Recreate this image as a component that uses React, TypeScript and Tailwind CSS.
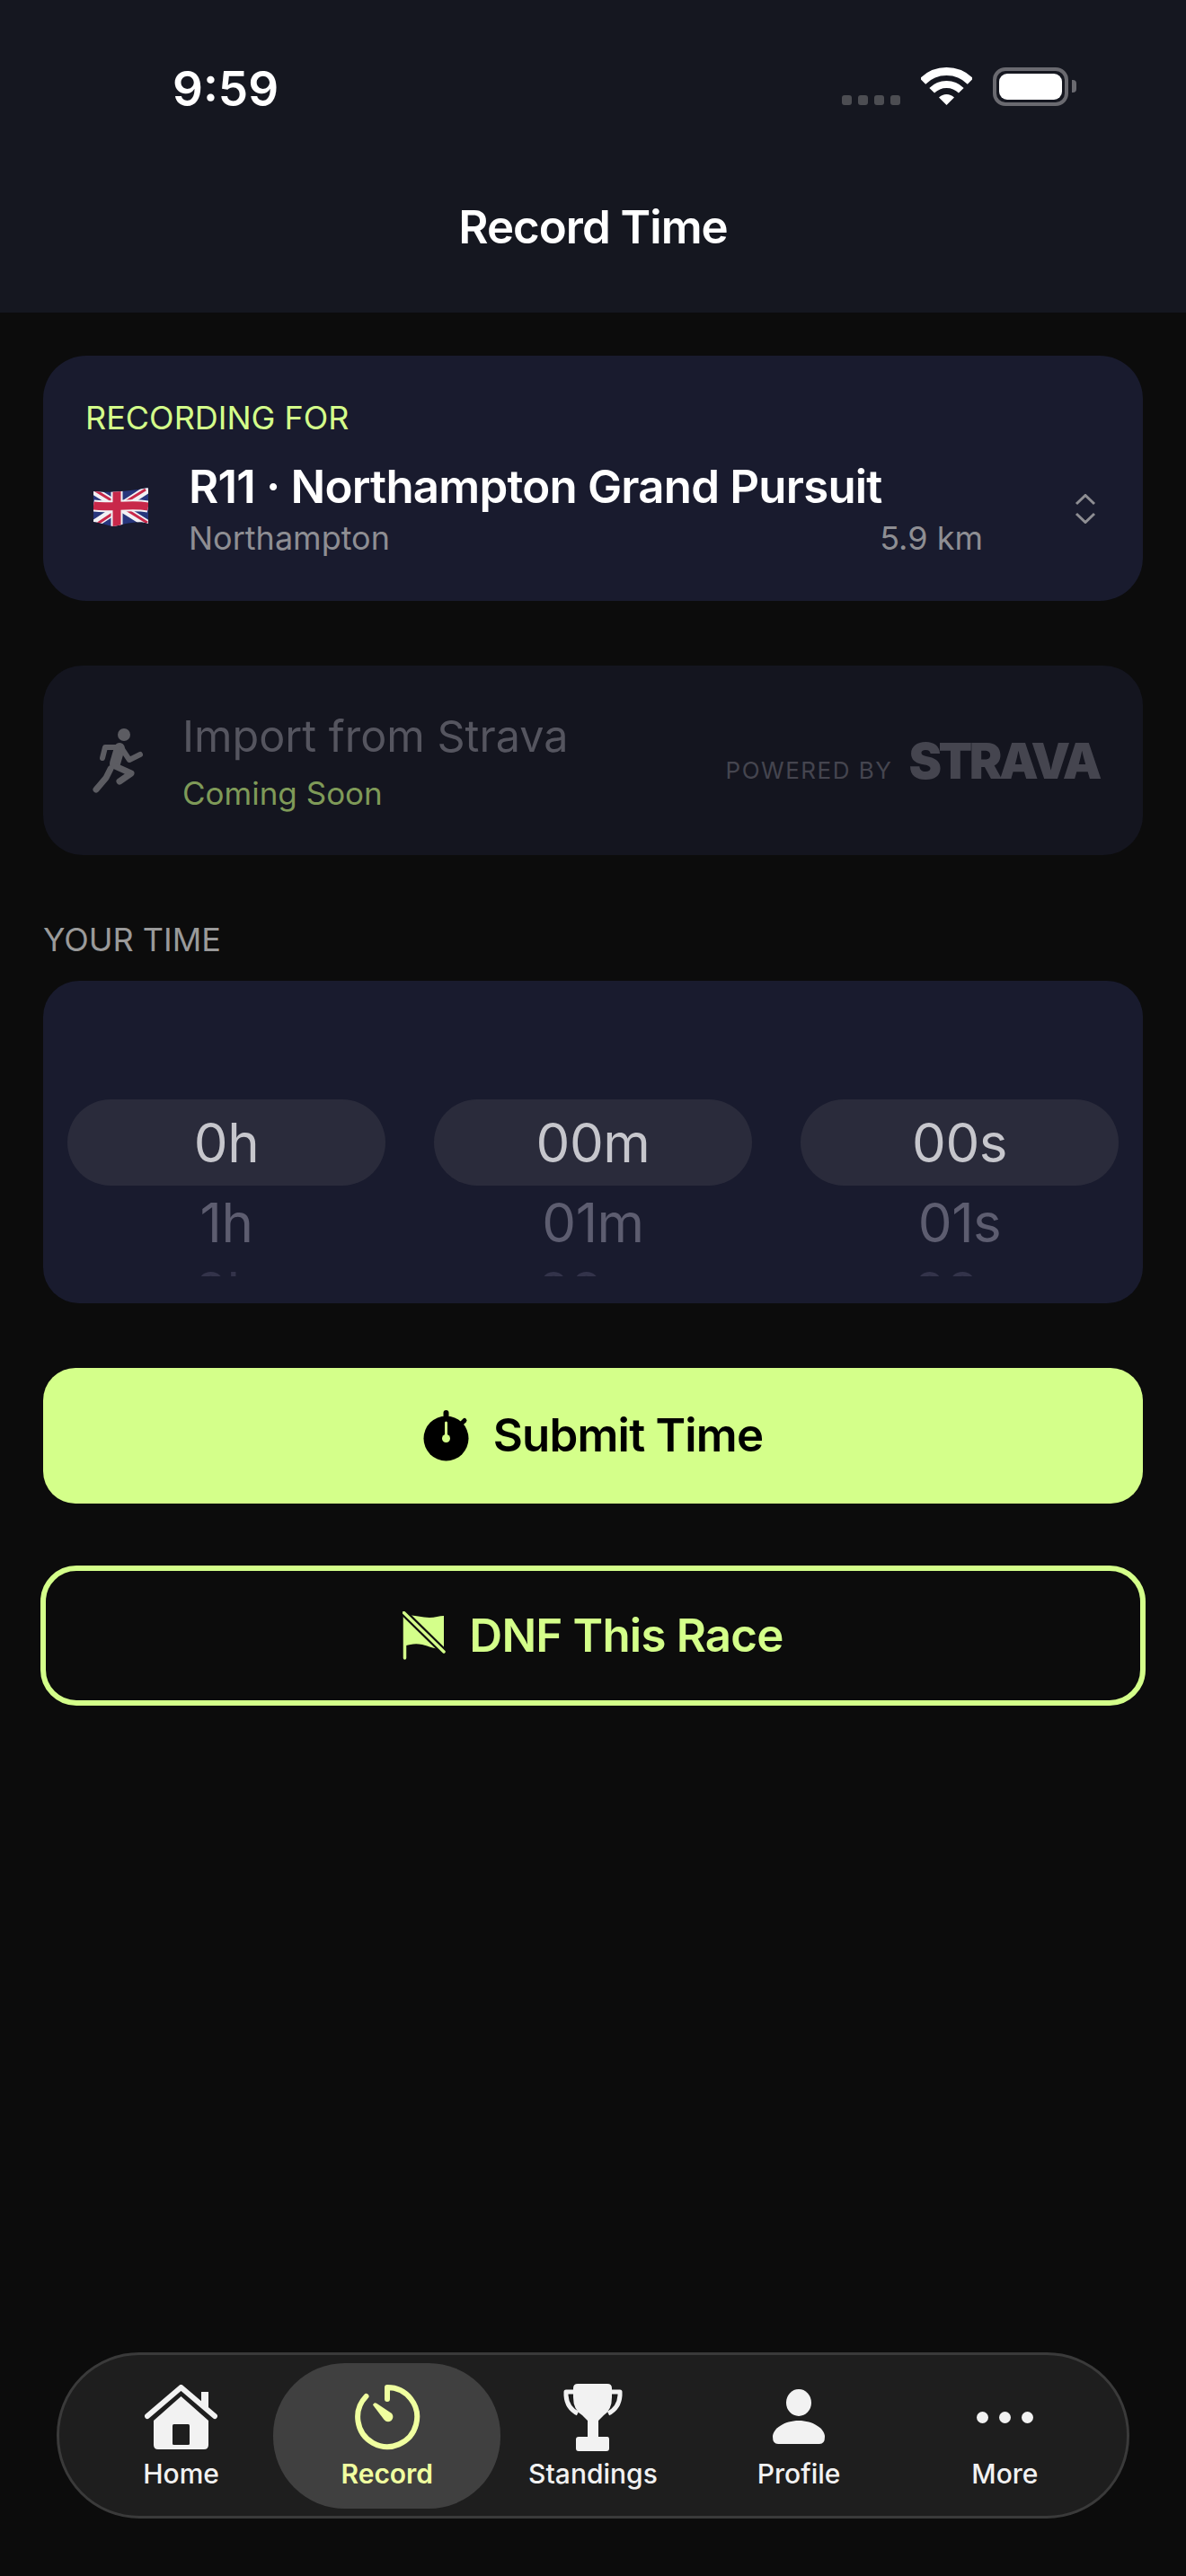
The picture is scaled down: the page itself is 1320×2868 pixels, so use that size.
import React from 'react'

function WifiIcon() {
    return (
        <svg width="57" height="42" viewBox="0 0 57 42" fill="none">
            <path d="M2 15.5A37.5 37.5 0 0 1 55 15.5" stroke="#fff" strokeWidth="9" />
            <path d="M12.2 25.7A23 23 0 0 1 44.8 25.7" stroke="#fff" strokeWidth="8" />
            <path d="M28.5 42L20 33.5A12 12 0 0 1 37 33.5Z" fill="#fff" />
        </svg>
    )
}

function UkFlag() {
    return (
        <svg width="61" height="43" viewBox="0 0 61 43" fill="none">
            <clipPath id="flag-clip">
                <path d="M0 4C15 6 40 4 61 0L61 40C50 35 30 42 22 43C14 42 6 38 0 38Z" />
            </clipPath>
            <g clipPath="url(#flag-clip)">
                <rect width="61" height="43" fill="#27367c" />
                <path d="M0 3L61 41M61 1L0 41" stroke="#f1f1f4" strokeWidth="9" />
                <path d="M2 3L28 19M60 39L36 24M58 2L37 15M3 41L24 27" stroke="#c8284a" strokeWidth="3" />
                <path d="M0 20C20 23 40 17 61 21" stroke="#f1f1f4" strokeWidth="13" />
                <path d="M26 0L26 43" stroke="#f1f1f4" strokeWidth="13" />
                <path d="M26 0L26 43" stroke="#c8284a" strokeWidth="9" />
                <path d="M0 20C20 23 40 17 61 21" stroke="#c8284a" strokeWidth="9" />
            </g>
        </svg>
    )
}

function Chevrons() {
    return (
        <svg width="24" height="33" viewBox="0 0 24 33" fill="none" stroke="#8e8e93" strokeWidth="3">
            <path d="M2 11L12 1.5L22 11" />
            <path d="M2 22L12 31.5L22 22" />
        </svg>
    )
}

function Runner() {
    return (
        <svg width="90" height="90" viewBox="0 0 90 90" fill="none" stroke="#5c5c62" strokeLinecap="round" strokeLinejoin="round">
            <circle cx="48" cy="18" r="7" fill="#5c5c62" stroke="none" />
            <path d="M24 44L27 32L44 32" strokeWidth="6" />
            <path d="M43 33L38 50" strokeWidth="12" />
            <path d="M46 34L54 46L66 40" strokeWidth="6" />
            <path d="M36 52L56 61L43 70" strokeWidth="7" />
            <path d="M33 56L28 66L17 79" strokeWidth="7" />
        </svg>
    )
}

function Stopwatch() {
    return (
        <svg width="52" height="57" viewBox="0 0 52 57" fill="none">
            <circle cx="25.5" cy="31.5" r="25" fill="#000" />
            <rect x="22.5" y="0" width="6" height="9" rx="3" fill="#000" />
            <path d="M42 15.5L46 11.5" stroke="#000" strokeWidth="5" strokeLinecap="round" />
            <path d="M25.5 14V31" stroke="#d4ff8a" strokeWidth="3" strokeLinecap="round" />
            <circle cx="25.5" cy="31.5" r="4.5" fill="#d4ff8a" />
        </svg>
    )
}

function FlagOff() {
    return (
        <svg width="48" height="54" viewBox="0 0 48 54" fill="none">
            <path d="M2 4C14 4 22 7 30 7C36 7 41 5 46 5V42C38 43 30 39 22 37C14 35 8 37 4 38Z" fill="#d4ff8a" />
            <path d="M2.5 4V52" stroke="#d4ff8a" strokeWidth="3.5" strokeLinecap="round" />
            <path d="M0 0L48 47" stroke="#0d0d0d" strokeWidth="8" />
            <path d="M1.5 1.5L46 45" stroke="#d4ff8a" strokeWidth="3.5" strokeLinecap="round" />
        </svg>
    )
}

function HomeIcon() {
    return (
        <svg width="81" height="72" viewBox="0 0 81 72" fill="none">
            <path d="M3 35L40.5 3L78 35" stroke="#f2f2f2" strokeWidth="6" strokeLinecap="round" strokeLinejoin="round" />
            <path d="M63 8H71V30L63 23Z" fill="#f2f2f2" />
            <path d="M40.5 13L71 40V67Q71 72 66 72H15Q10 72 10 67V40Z" fill="#f2f2f2" />
            <rect x="31" y="44" width="19" height="23" rx="1.5" fill="#1e1e1e" />
        </svg>
    )
}

function RecordIcon() {
    return (
        <svg width="74" height="74" viewBox="0 0 74 74" fill="none">
            <path d="M37 17V4A33 33 0 1 1 13.5 14" stroke="#f0ffa0" strokeWidth="6" strokeLinecap="round" strokeLinejoin="round" />
            <path d="M21 23.5Q22.5 20 25.5 22L42 33Q45 37 41.5 41Q37 44 33.5 40Z" fill="#f0ffa0" />
        </svg>
    )
}

function TrophyIcon() {
    return (
        <svg width="70" height="80" viewBox="15 10 70 80" fill="none">
            <path d="M33 13H66Q71 13 71 18V28Q71 42 62 48L56 54V72H66Q68 72 68 75V85Q68 88 65 88H34Q31 88 31 85V75Q31 72 34 72H44V54L38 48Q28 42 28 28V18Q28 13 33 13Z" fill="#f2f2f2" />
            <path d="M30 22H20V26Q21 40 33 46" stroke="#f2f2f2" strokeWidth="5" strokeLinejoin="round" />
            <path d="M69 22H80V26Q79 40 67 46" stroke="#f2f2f2" strokeWidth="5" strokeLinejoin="round" />
        </svg>
    )
}

function ProfileIcon() {
    return (
        <svg width="58" height="62" viewBox="0 0 58 62" fill="none">
            <ellipse cx="29" cy="15" rx="14" ry="15" fill="#f2f2f2" />
            <path d="M0 53C0 44 13 35 29 35C45 35 58 44 58 53Q58 61 52 61H6Q0 61 0 53Z" fill="#f2f2f2" />
        </svg>
    )
}

function MoreIcon() {
    return (
        <div className="flex h-full items-center gap-[12px]">
            <div className="h-[13px] w-[13px] rounded-full bg-[#f2f2f2]" />
            <div className="h-[13px] w-[13px] rounded-full bg-[#f2f2f2]" />
            <div className="h-[13px] w-[13px] rounded-full bg-[#f2f2f2]" />
        </div>
    )
}

function WheelColumn({ value, next, after }: { value: string; next: string; after: string }) {
    return (
        <div className="flex h-[197px] flex-col items-center overflow-hidden">
            <div className="flex h-[96px] w-full shrink-0 items-center justify-center rounded-[48px] bg-[#2a2b3b] text-[60px] leading-none tracking-[-0.5px] text-[#c6c6cc]">
                {value}
            </div>
            <div className="flex h-[82px] shrink-0 items-center text-[60px] leading-none tracking-[-0.5px] text-[#5d5d70]">{next}</div>
            <div className="flex h-[72px] shrink-0 items-center text-[60px] leading-none tracking-[-0.5px] text-[#33334a]">{after}</div>
        </div>
    )
}

const tabs = [
    { label: 'Home', icon: <HomeIcon /> },
    { label: 'Record', icon: <RecordIcon />, active: true },
    { label: 'Standings', icon: <TrophyIcon /> },
    { label: 'Profile', icon: <ProfileIcon /> },
    { label: 'More', icon: <MoreIcon /> },
]

export default function App() {
    return (
        <div className="flex min-h-[2868px] w-[1320px] flex-col bg-[#0c0c0c] font-[family-name:Inter,sans-serif] text-white">
            <header className="h-[348px] bg-[#151720]">
                <div className="flex items-start justify-between pl-[192px] pr-[122px] pt-[75px]">
                    <span className="mt-[2px] text-[53px] font-semibold leading-[44px]">9:59</span>
                    <div className="flex items-start">
                        <div className="mr-[23px] mt-[31px] flex gap-[7px]">
                            <div className="h-[11px] w-[11px] rounded-[3px] bg-[#4c4d52]" />
                            <div className="h-[11px] w-[11px] rounded-[3px] bg-[#4c4d52]" />
                            <div className="h-[11px] w-[11px] rounded-[3px] bg-[#4c4d52]" />
                            <div className="h-[11px] w-[11px] rounded-[3px] bg-[#4c4d52]" />
                        </div>
                        <WifiIcon />
                        <div className="ml-[23px] h-[43px] w-[84px] rounded-[14px] border-[4px] border-[#6a6a70] p-[3px]">
                            <div className="h-full w-full rounded-[9px] bg-white" />
                        </div>
                        <div className="ml-[4px] mt-[14px] h-[14px] w-[5px] rounded-r-[4px] bg-[#6a6a70]" />
                    </div>
                </div>
                <h1 className="mt-[102px] text-center text-[51px] font-semibold leading-[60px] tracking-[-1px]">Record Time</h1>
            </header>

            <main className="px-[48px] pt-[48px]">
                <section className="h-[273px] rounded-[48px] bg-[#191b2e] pl-[47px] pt-[49px]">
                    <p className="text-[36px] leading-[40px] text-[#d4ff8a]">RECORDING FOR</p>
                    <div className="mt-[25px] flex items-center">
                        <div className="ml-[9px] mr-[45px] mt-[-5px]">
                            <UkFlag />
                        </div>
                        <div className="w-[884px]">
                            <p className="text-[51px] font-semibold leading-[64px] tracking-[-0.8px]">R11 · Northampton Grand Pursuit</p>
                            <div className="flex justify-between text-[36px] leading-[50px] text-[#8e8e93]">
                                <span>Northampton</span>
                                <span>5.9 km</span>
                            </div>
                        </div>
                        <div className="ml-[102px] mt-[-2px]">
                            <Chevrons />
                        </div>
                    </div>
                </section>

                <section className="mt-[72px] flex h-[211px] items-start rounded-[44px] bg-[#14151f] pl-[42px] pr-[49px] pt-[49px]">
                    <div className="mr-[23px] mt-[10px]">
                        <Runner />
                    </div>
                    <div>
                        <p className="text-[48.5px] leading-[60px] text-[#55555f]">Import from Strava</p>
                        <p className="mt-[8px] text-[35px] leading-[50px] text-[#7f9a58]">Coming Soon</p>
                    </div>
                    <div className="ml-auto mt-[27px] flex items-baseline gap-[18px] text-[#45454f]">
                        <span className="text-[26px] leading-[60px] tracking-[1.5px]">POWERED BY</span>
                        <span className="text-[55px] font-black leading-[60px] tracking-[-3.5px]">STRAVA</span>
                    </div>
                </section>

                <p className="mt-[74px] text-[36px] leading-[40px] text-[#9a9a9a]">YOUR TIME</p>

                <section className="mt-[26px] grid h-[359px] grid-cols-3 gap-[54px] rounded-[40px] bg-[#191b2e] px-[27px] pt-[132px]">
                    <WheelColumn value="0h" next="1h" after="2h" />
                    <WheelColumn value="00m" next="01m" after="02m" />
                    <WheelColumn value="00s" next="01s" after="02s" />
                </section>

                <button className="mt-[72px] flex h-[151px] w-full items-center justify-center gap-[26px] rounded-[36px] bg-[#d4ff8a] text-[51px] font-semibold tracking-[-0.8px] text-black">
                    <Stopwatch />
                    Submit Time
                </button>

                <button className="mx-[-3px] mt-[69px] flex h-[156px] w-[1230px] items-center justify-center gap-[26px] rounded-[40px] border-[6px] border-[#d4ff8a] text-[51px] font-semibold tracking-[-0.8px] text-[#d4ff8a]">
                    <FlagOff />
                    DNF This Race
                </button>
            </main>

            <nav className="relative mx-[63px] mb-[64px] mt-auto flex h-[185px] rounded-[92px] border-[3px] border-[#3a3a3a] bg-[#1e1e1e] px-[21px]">
                {/* highlight behind the active tab */}
                <div className="absolute left-[238px] top-[9px] h-[162px] w-[253px] rounded-[80px] bg-[#404040]" />
                {tabs.map((tab) => (
                    <div key={tab.label} className="relative flex w-[229.2px] flex-col items-center">
                        <div className="mt-[29px] flex h-[80px] items-center justify-center">{tab.icon}</div>
                        <span className={tab.active ? 'mt-[3px] text-[30px] font-semibold leading-[40px] text-[#f0ffa0]' : 'mt-[3px] text-[30px] font-medium leading-[40px] text-[#f2f2f2]'}>
                            {tab.label}
                        </span>
                    </div>
                ))}
            </nav>
        </div>
    )
}
